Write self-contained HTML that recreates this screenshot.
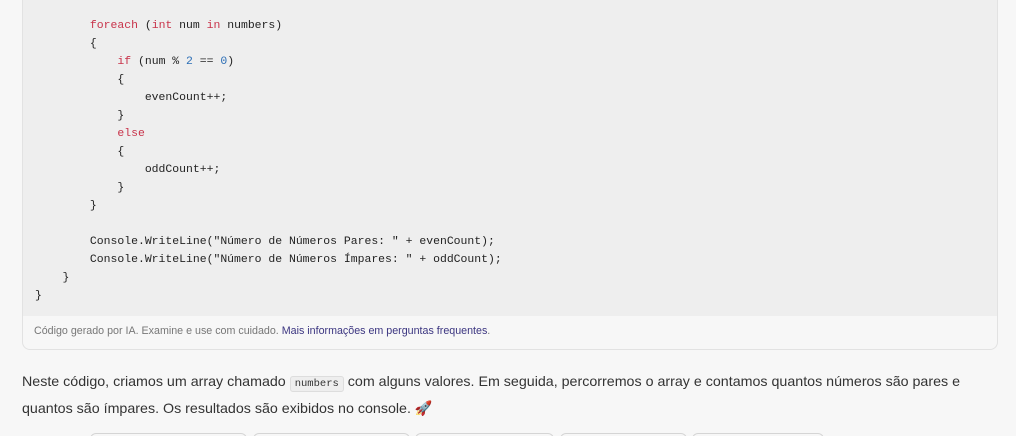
<!DOCTYPE html>
<html><head><meta charset="utf-8"><style>
html,body{margin:0;width:1016px;height:436px;overflow:hidden}
body{background:#f7f7f7;position:relative;font-family:"Liberation Sans",sans-serif}
.card{position:absolute;left:22px;top:-10px;width:974px;height:358px;border:1px solid #e2e2e2;border-radius:8px;background:#f7f7f7;overflow:hidden}
.code{position:absolute;left:0;top:0;width:974px;height:325px;background:#eeeeee}
pre{margin:0;position:absolute;left:12px;top:26px;font-family:"Liberation Mono",monospace;font-size:11.45px;line-height:18px;color:#222}
.k{color:#c8334a}.n{color:#2a6db5}
.foot{position:absolute;left:11px;top:334px;font-size:10.7px;color:#777}
.foot a{color:#3b3580;text-decoration:none}
p{position:absolute;left:22px;top:370px;margin:0;width:960px;font-size:14.25px;line-height:25px;color:#333}
code{font-family:"Liberation Mono",monospace;font-size:10.5px;background:#eee;border:1px solid #ddd;border-radius:3px;padding:1px 4px}
.b{position:absolute;top:433px;height:20px;border:1px solid #d5d5d5;border-radius:6px;background:#f7f7f7}
</style></head><body>
<div class="card"><div class="code"><pre>        <span class="k">foreach</span> (<span class="k">int</span> num <span class="k">in</span> numbers)
        {
            <span class="k">if</span> (num % <span class="n">2</span> == <span class="n">0</span>)
            {
                evenCount++;
            }
            <span class="k">else</span>
            {
                oddCount++;
            }
        }

        Console.WriteLine("Número de Números Pares: " + evenCount);
        Console.WriteLine("Número de Números Ímpares: " + oddCount);
    }
}</pre></div>
<div class="foot">Código gerado por IA. Examine e use com cuidado. <a>Mais informações em perguntas frequentes</a>.</div></div>
<p>Neste código, criamos um array chamado <code>numbers</code> com alguns valores. Em seguida, percorremos o array e contamos quantos números são pares e quantos são ímpares. Os resultados são exibidos no console. <span style="color:#d04060">🚀</span></p>
<div class="b" style="left:90px;width:155px"></div>
<div class="b" style="left:253px;width:155px"></div>
<div class="b" style="left:415px;width:137px"></div>
<div class="b" style="left:560px;width:125px"></div>
<div class="b" style="left:692px;width:130px"></div>
</body></html>
